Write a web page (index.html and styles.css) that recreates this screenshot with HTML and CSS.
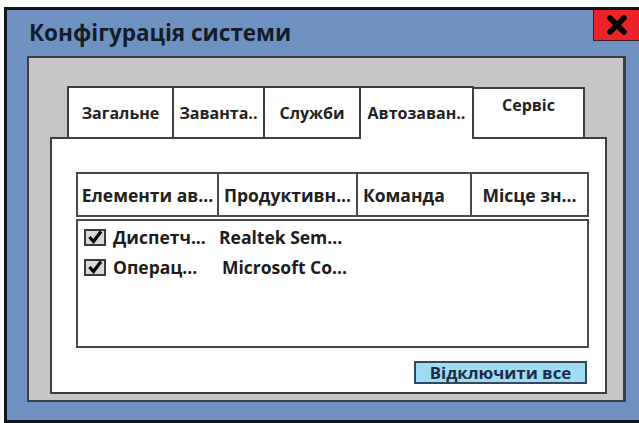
FILE: index.html
```html
<!DOCTYPE html>
<html lang="uk">
<head>
<meta charset="utf-8">
<title>Конфігурація системи</title>
<link rel="stylesheet" href="styles.css">
</head>
<body>
<div class="window">
  <div class="titlebar">
    <h1 class="title">Конфігурація системи</h1>
    <button class="close" type="button" aria-label="Закрити">
      <svg width="22" height="20" viewBox="0 0 22 20" aria-hidden="true">
        <path d="M4 3 L18 17 M18 3 L4 17" stroke="#000" stroke-width="5.5" stroke-linecap="round"/>
      </svg>
    </button>
  </div>

  <div class="panel">
    <div class="tabs">
      <div class="tab tab-general">Загальне</div>
      <div class="tab tab-boot">Заванта..</div>
      <div class="tab tab-services">Служби</div>
      <div class="tab tab-startup is-active">Автозаван..</div>
      <div class="tab tab-tools is-raised">Сервіс</div>
    </div>

    <div class="sheet">
      <div class="columns">
        <div class="col col-item">Елементи ав...</div>
        <div class="col col-vendor">Продуктивн...</div>
        <div class="col col-cmd">Команда</div>
        <div class="col col-place">Місце зн...</div>
      </div>

      <div class="list">
        <div class="row">
          <span class="check"><svg width="16" height="14" viewBox="0 0 16 14" aria-hidden="true"><path d="M2.5 7 L6.5 11.5 L14 1.5" fill="none" stroke="#000" stroke-width="3.2"/></svg></span>
          <span class="cell cell-name">Диспетч...</span>
          <span class="cell cell-vendor">Realtek Sem...</span>
        </div>
        <div class="row">
          <span class="check"><svg width="16" height="14" viewBox="0 0 16 14" aria-hidden="true"><path d="M2.5 7 L6.5 11.5 L14 1.5" fill="none" stroke="#000" stroke-width="3.2"/></svg></span>
          <span class="cell cell-name">Операц...</span>
          <span class="cell cell-vendor cell-shift">Microsoft Co...</span>
        </div>
      </div>

      <div class="actions">
        <button class="btn-disable" type="button">Відключити все</button>
      </div>
    </div>
  </div>
</div>
</body>
</html>
```

FILE: styles.css
```css
html, body {
  margin: 0;
  padding: 0;
  overflow: hidden;
  background: #ffffff;
}

body {
  font-family: "Open Sans", "Noto Sans", sans-serif;
  font-weight: 700;
  color: #1e1e1e;
}

/* outer window: its right edge runs off the page */
.window {
  box-sizing: border-box;
  width: 638px;
  height: 416px;
  margin: 7px 0 0 4px;
  border: 3px solid #111418;
  background: #6f92c3;
  display: flex;
  flex-direction: column;
}

.titlebar {
  height: 46px;
  display: flex;
  align-items: flex-start;
}

.title {
  margin: 0;
  padding: 9px 0 0 22px;
  font-size: 22.5px;
  line-height: 28px;
  font-weight: 700;
  color: #141c2a;
}

.close {
  margin-left: auto;
  width: 46px;
  height: 31px;
  padding: 0;
  border: 0;
  border-left: 1px solid #3a2020;
  border-bottom: 1px solid #3a2020;
  background: #ec2329;
  display: flex;
  align-items: center;
  justify-content: center;
}

/* grey dialog body */
.panel {
  box-sizing: border-box;
  margin: 0 13px 0 20px;
  height: 346px;
  border: 2px solid #3e3e3e;
  border-right-width: 3px;
  background: #c6c6c6;
  padding: 28px 16px 6px 21px;
  display: flex;
  flex-direction: column;
}

.tabs {
  display: flex;
  margin-left: 17px;
  height: 51px;
  align-items: flex-end;
  position: relative;
  z-index: 1;
}

.tab {
  box-sizing: border-box;
  height: 51px;
  border: 2px solid #3e3e3e;
  border-bottom: 0;
  background: #ffffff;
  margin-right: -2px;
  display: flex;
  align-items: center;
  justify-content: center;
  font-size: 16px;
  color: #222;
  padding-top: 0;
  white-space: nowrap;
}

.tab-general { width: 107px; }
.tab-boot { width: 93px; }
.tab-services { width: 98px; }
.tab-startup { width: 115px; }
.tab-tools { width: 113px; height: 50px; }

.tab.is-active {
  height: 53px;
  margin-bottom: -2px;
  padding-bottom: 2px;
}

.tab.is-raised {
  align-items: flex-start;
  padding-top: 5px;
}

/* white page under the tabs */
.sheet {
  flex: 1;
  box-sizing: border-box;
  border: 2px solid #3e3e3e;
  background: #ffffff;
  padding: 33px 16px 0 24px;
  display: flex;
  flex-direction: column;
}

.columns {
  display: grid;
  grid-template-columns: 139px 139px 114px 1fr;
  height: 45px;
  box-sizing: border-box;
  border: 2px solid #4a4a4a;
}

.col {
  display: flex;
  align-items: center;
  justify-content: center;
  font-size: 17.5px;
  color: #202020;
  border-left: 2px solid #4a4a4a;
  white-space: nowrap;
}

.col-item { border-left: 0; }
.col-cmd { justify-content: flex-start; padding-left: 5px; }

.list {
  box-sizing: border-box;
  margin-top: 2px;
  height: 129px;
  border: 2px solid #4a4a4a;
  padding: 6px 0 0 6px;
  display: flex;
  flex-direction: column;
  gap: 10px;
}

.row {
  display: flex;
  align-items: center;
  height: 20px;
}

.check {
  box-sizing: border-box;
  width: 22px;
  height: 17px;
  border: 2px solid #3a3a3a;
  background: #d8d8d8;
  display: flex;
  align-items: center;
  justify-content: center;
}

.cell {
  font-size: 17.5px;
  color: #1c1c1c;
  white-space: nowrap;
}

.cell-name {
  width: 106px;
  padding-left: 7px;
}

.cell-shift { padding-left: 3px; }

.actions {
  display: flex;
  justify-content: flex-end;
  padding-top: 13px;
  padding-right: 2px;
}

.btn-disable {
  box-sizing: border-box;
  width: 173px;
  height: 23px;
  padding: 0;
  border: 2px solid #33495a;
  background: #9ddcf1;
  font-family: "Open Sans", "Noto Sans", sans-serif;
  font-weight: 700;
  font-size: 16.8px;
  line-height: 19px;
  color: #1a2c48;
}
```
